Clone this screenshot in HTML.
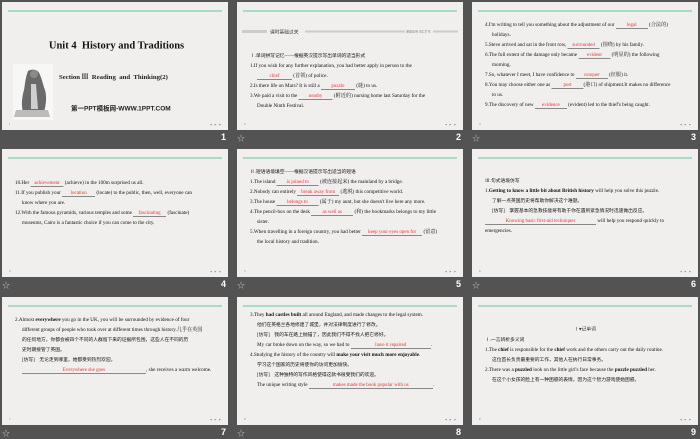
<!DOCTYPE html>
<html><head><meta charset="utf-8"><style>
*{margin:0;padding:0;box-sizing:border-box}
body{width:700px;height:438px;background:#535353;position:relative;overflow:hidden;font-family:"Liberation Serif","Noto Serif CJK SC",serif}
.s{position:absolute;width:452px;height:256px;background:#f0efed;transform:scale(0.5);transform-origin:0 0;overflow:hidden}
.g{position:absolute;left:12px;right:12px;top:17px;height:2px;background:#62c497}
.pn{position:absolute;left:14px;bottom:8px;font-size:6px;color:#777}
.nav{position:absolute;right:12px;bottom:7px;font-size:7px;color:#888;letter-spacing:2px}
.t{position:absolute;left:26px;right:24px;font-size:10.3px;line-height:20px;color:#111;text-align:justify}
.t p{margin:0}
.in{padding-left:14px}
.b{display:inline-block;border-bottom:1px solid #222;text-align:center;color:#e33;line-height:13px;vertical-align:baseline;font-size:10px}
.lab{position:absolute;color:#fff;font-size:9px;font-family:"Liberation Sans",sans-serif;font-weight:bold}
.st{position:absolute;color:#bbb;font-size:8px;font-family:"Noto Sans CJK SC",sans-serif}
.cj{font-family:"Liberation Serif","Noto Sans CJK SC",sans-serif;font-size:9.5px}
</style></head><body>

<!-- slide 1 -->
<div class="s" style="left:2px;top:2px">
<div class="g"></div>
<div style="position:absolute;top:74px;width:100%;text-align:center;font-weight:bold;font-size:21px;color:#111;padding-left:6px">Unit 4&nbsp; History and Traditions</div>
<div style="position:absolute;left:22px;top:124px;width:80px;height:112px;background:#f7f7f6">
<svg width="80" height="112"><path d="M30 14c10-6 22-2 24 8 4 8 6 20 10 30 4 14 2 30-2 44l-42 0c-4-14-2-30 2-44 2-10 2-22 8-38z" fill="#6a6a6a"/><path d="M36 40l10 0 4 50-14 0z" fill="#cfcfcf"/><path d="M6 92l64 0 4 14-72 0z" fill="#bbb"/><circle cx="42" cy="20" r="8" fill="#8a8a8a"/></svg>
</div>
<div style="position:absolute;left:114px;top:138px;font-weight:bold;font-size:13.5px;color:#222">Section Ⅲ&nbsp; Reading&nbsp; and&nbsp; Thinking(2)</div>
<div style="position:absolute;left:138px;top:202px;font-weight:bold;font-size:13px;color:#222;font-family:'Liberation Sans','Noto Sans CJK SC',sans-serif">第一PPT模板网-WWW.1PPT.COM</div>
<div class="pn">1</div><div class="nav">◂ ▸ ▸</div>
</div>

<!-- slide 2 -->
<div class="s" style="left:237px;top:2px">
<div class="g"></div>
<div style="position:absolute;left:10px;top:56px;width:50px;height:6px;background:#ccc"></div>
<div class="cj" style="position:absolute;left:66px;top:52px;color:#333">课时基础过关</div>
<div style="position:absolute;left:136px;top:57px;width:200px;height:4px;background:#ccc"></div>
<div class="cj" style="position:absolute;left:338px;top:54px;font-size:6px;color:#888">课堂应用 词汇扩充</div>
<div style="position:absolute;left:392px;top:57px;width:50px;height:4px;background:#ccc"></div>
<div class="t" style="top:98px">
<p class="cj">Ⅰ.单词拼写记忆——根据英汉提示写出单词的适当形式</p>
<p>1.If you wish for any further explanation, you had better apply in person to the</p>
<p class="in"><span class="b" style="width:70px">chief</span> (首领) of police.</p>
<p>2.Is there life on Mars? It is still a <span class="b" style="width:68px">puzzle</span> (谜) to us.</p>
<p>3.We paid a visit to the <span class="b" style="width:68px">nearby</span> (附近的) nursing home last Saturday for the</p>
<p class="in">Double Ninth Festival.</p>
</div>
<div class="pn">2</div><div class="nav">◂ ▸ ▸</div>
</div>

<!-- slide 3 -->
<div class="s" style="left:472px;top:2px">
<div class="g"></div>
<div class="t" style="top:36px">
<p>4.I'm writing to tell you something about the adjustment of our <span class="b" style="width:64px">legal</span> (合法的)</p>
<p class="in">holidays.</p>
<p>5.Steve arrived and sat in the front row, <span class="b" style="width:64px">surrounded</span> (围绕) by his family.</p>
<p>6.The full extent of the damage only became <span class="b" style="width:64px">evident</span> (明显的) the following</p>
<p class="in">morning.</p>
<p>7.So, whatever I meet, I have confidence to <span class="b" style="width:64px">conquer</span> (征服) it.</p>
<p>8.You may choose either one as <span class="b" style="width:64px">port</span>(港口) of shipment.It makes no difference</p>
<p class="in">to us.</p>
<p>9.The discovery of new <span class="b" style="width:64px">evidence</span> (evident) led to the thief's being caught.</p>
</div>
<div class="pn">3</div><div class="nav">◂ ▸ ▸</div>
</div>

<!-- slide 4 -->
<div class="s" style="left:2px;top:149px">
<div class="g"></div>
<div class="t" style="top:58px">
<p>10.Her <span class="b" style="width:66px">achievement</span> (achieve) in the 100m surprised us all.</p>
<p>11.If you publish your <span class="b" style="width:66px">location</span> (locate) to the public, then, well, everyone can</p>
<p class="in">know where you are.</p>
<p>12.With the famous pyramids, various temples and some <span class="b" style="width:66px">fascinating</span> (fascinate)</p>
<p class="in">museums, Cairo is a fantastic choice if you can come to the city.</p>
</div>
<div class="pn">4</div><div class="nav">◂ ▸ ▸</div>
</div>

<!-- slide 5 -->
<div class="s" style="left:237px;top:149px">
<div class="g"></div>
<div class="t" style="top:36px">
<p class="cj">Ⅱ.短语语境填空——根据汉语提示写出适当的短语</p>
<p>1.The island <span class="b" style="width:84px">is joined to</span> (被连接起来) the mainland by a bridge.</p>
<p>2.Nobody can entirely <span class="b" style="width:84px">break away from</span> (逃脱) this competitive world.</p>
<p>3.The house <span class="b" style="width:84px">belongs to</span> (属于) my aunt, but she doesn't live here any more.</p>
<p>4.The pencil-box on the desk <span class="b" style="width:84px">as well as</span> (和) the bookmarks belongs to my little</p>
<p class="in">sister.</p>
<p>5.When travelling in a foreign country, you had better <span class="b" style="width:120px">keep your eyes open for</span> (留意)</p>
<p class="in">the local history and tradition.</p>
</div>
<div class="pn">5</div><div class="nav">◂ ▸ ▸</div>
</div>

<!-- slide 6 -->
<div class="s" style="left:472px;top:149px">
<div class="g"></div>
<div class="t" style="top:54px">
<p class="cj">Ⅲ.句式语境仿写</p>
<p>1.<b>Getting to know a little bit about British history</b> will help you solve this puzzle.</p>
<p class="in cj">了解一点英国历史将帮助你解决这个难题。</p>
<p class="in cj">[仿写]　掌握基本的急救技能将有助于你在遇到紧急情况时迅速做出反应。</p>
<p><span class="b" style="width:222px">Knowing basic first-aid techniques</span> will help you respond quickly to</p>
<p>emergencies.</p>
</div>
<div class="pn">6</div><div class="nav">◂ ▸ ▸</div>
</div>

<!-- slide 7 -->
<div class="s" style="left:2px;top:297px">
<div class="g"></div>
<div class="t" style="top:36px">
<p>2.Almost <b>everywhere</b> you go in the UK, you will be surrounded by evidence of four</p>
<p class="in">different groups of people who took over at different times through history.几乎在英国</p>
<p class="in cj">的任何地方，你都会被四个不同的人群留下来的证据所包围，这些人在不同的历</p>
<p class="in cj">史时期接管了英国。</p>
<p class="in cj">[仿写]　无论走到哪里，她都受到热烈欢迎。</p>
<p class="in"><span class="b" style="width:248px">Everywhere she goes</span>, she receives a warm welcome.</p>
</div>
<div class="pn">7</div><div class="nav">◂ ▸ ▸</div>
</div>

<!-- slide 8 -->
<div class="s" style="left:237px;top:297px">
<div class="g"></div>
<div class="t" style="top:26px">
<p>3.They <b>had castles built</b> all around England, and made changes to the legal system.</p>
<p class="in cj">他们在英格兰各地修建了城堡，并对法律制度进行了修改。</p>
<p class="in cj">[仿写]　我的车在路上抛锚了，因此我们不得不找人把它修好。</p>
<p class="in">My car broke down on the way, so we had to <span class="b" style="width:160px">have it repaired</span>.</p>
<p>4.Studying the history of the country will <b>make your visit much more enjoyable</b>.</p>
<p class="in cj">学习这个国家的历史将使你的访问更加愉快。</p>
<p class="in cj">[仿写]　这种独特的写作风格使得这款书很受我们的欢迎。</p>
<p class="in">The unique writing style <span class="b" style="width:248px">makes made the book popular with us</span>.</p>
</div>
<div class="pn">8</div><div class="nav">◂ ▸ ▸</div>
</div>

<!-- slide 9 -->
<div class="s" style="left:472px;top:297px">
<div class="g"></div>
<div class="cj" style="position:absolute;top:56px;width:100%;text-align:center;color:#333">Ⅰ♥记单词</div>
<div class="t" style="top:76px">
<p class="cj">Ⅰ.一言辨析多义词</p>
<p>1.The <b>chief</b> is responsible for the <b>chief</b> work and the others carry out the daily routine.</p>
<p class="in cj">这位首长负责最重要的工作，其他人在执行日常事务。</p>
<p>2.There was a <b>puzzled</b> look on the little girl's face because the <b>puzzle puzzled</b> her.</p>
<p class="in cj">在这个小女孩的脸上有一种困惑的表情，因为这个智力游戏使她困惑。</p>
</div>
<div class="pn">9</div><div class="nav">◂ ▸ ▸</div>
</div>

<!-- labels -->
<div class="lab" style="left:221px;top:132px">1</div>
<div class="st" style="left:237px;top:133px">☆</div><div class="lab" style="left:456px;top:132px">2</div>
<div class="st" style="left:472px;top:133px">☆</div><div class="lab" style="left:691px;top:132px">3</div>
<div class="st" style="left:2px;top:280px">☆</div><div class="lab" style="left:221px;top:279px">4</div>
<div class="st" style="left:237px;top:280px">☆</div><div class="lab" style="left:456px;top:279px">5</div>
<div class="st" style="left:472px;top:280px">☆</div><div class="lab" style="left:691px;top:279px">6</div>
<div class="st" style="left:2px;top:428px">☆</div><div class="lab" style="left:221px;top:427px">7</div>
<div class="st" style="left:237px;top:428px">☆</div><div class="lab" style="left:456px;top:427px">8</div>
<div class="lab" style="left:691px;top:427px">9</div>
</body></html>
